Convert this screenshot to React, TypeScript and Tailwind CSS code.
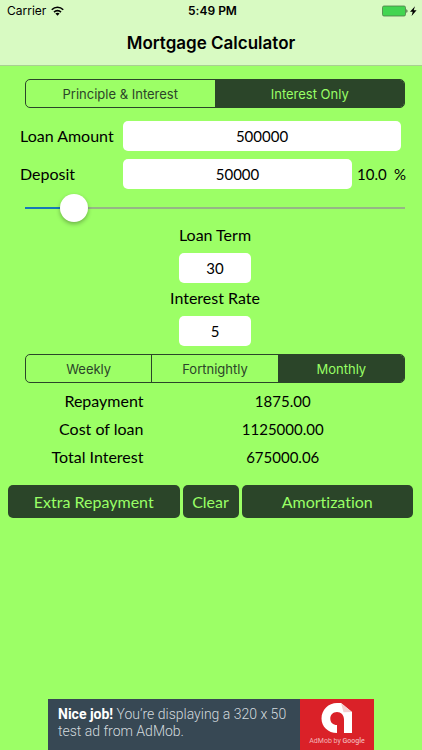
import React, { useState } from 'react';
import clsx from 'clsx';

const labelText = "font-['Gill_Sans','Lato',sans-serif] text-base leading-6 text-black";
const fieldBox = 'h-[30px] rounded-[5px] bg-white text-center text-[15px] outline-none';
const actionButton =
  "h-[33px] rounded-[5px] bg-[#2b4529] font-['Gill_Sans','Lato',sans-serif] text-base leading-6 text-[#99ff66]";

const Segmented = ({
  options,
  value,
  onChange,
}: {
  options: string[];
  value: string;
  onChange: (v: string) => void;
}) => (
  <div className="flex h-[29px] divide-x divide-[#2b4529] overflow-hidden rounded-[5px] border border-[#2b4529]">
    {options.map((option) => (
      <button
        key={option}
        type="button"
        aria-pressed={option === value}
        onClick={() => onChange(option)}
        className={clsx(
          "flex-1 basis-0 font-['Inter',sans-serif] text-[13px] leading-5",
          option === value ? 'bg-[#2b4529] text-[#99ff66]' : 'text-[#2b4529]',
        )}
      >
        {option}
      </button>
    ))}
  </div>
);

const StatusBar = () => (
  <div className="grid h-5 grid-cols-3 items-center pt-[2px] pr-1 pl-[7px] font-['Inter',sans-serif] text-xs text-black">
    <div className="flex items-center gap-[5px]">
      <span>Carrier</span>
      <svg width="13" height="10" viewBox="0 0 26 20" fill="none" stroke="#000" strokeWidth="3.2">
        <path d="M1.5 7.5C8 1 18 1 24.5 7.5" />
        <path d="M6 12.2C10 8.2 16 8.2 20 12.2" />
        <path d="M13 19.5L8.8 15.2C11.2 12.9 14.8 12.9 17.2 15.2Z" fill="#000" stroke="none" />
      </svg>
    </div>
    <span className="text-center font-semibold">5:49 PM</span>
    <div className="flex justify-end">
      <svg width="36" height="12" viewBox="0 0 36 12">
        <rect x="0.5" y="1" width="23" height="10" rx="1.5" fill="#43d551" stroke="#4e7b48" strokeWidth="0.8" />
        <path d="M24.4 4.2C25.8 4.5 25.8 7.5 24.4 7.8Z" fill="#35542f" />
        <path d="M33 1.2L28 6.8H30.7L29.6 11L34.6 5.2H31.7Z" fill="#000" />
      </svg>
    </div>
  </div>
);

const AdBanner = () => (
  <a href="#ad" className="mx-12 mt-auto flex h-[51px] bg-[#374854] font-['Roboto',sans-serif]">
    <div className="flex-1 pt-[7px] pl-[10px] text-sm leading-[17px] font-light text-[#d3dade]">
      <p>
        <strong className="font-bold text-white">Nice job!</strong> You’re displaying a 320 x 50
      </p>
      <p>test ad from AdMob.</p>
    </div>
    <div className="flex w-[74px] flex-col items-center bg-[#da2128] pt-1">
      <svg width="32" height="31" viewBox="0 0 32 31" fill="#fff">
        <path d="M16 0H20L31 9V30H23V16.5C23 12 20 9 16 9C12 9 9.3 11.8 9.3 15.7C9.3 19.5 12 22 16 22V30C7 30 0.5 23.8 0.5 15.5C0.5 6.8 7.5 0 16 0Z" />
        <path d="M20 0L31 9L22.5 9.3Z" fill="#f3cfd0" />
      </svg>
      <span className="text-[7px] leading-[14px] text-[#f3b5b7]">
        AdMob by <b className="font-medium">Google</b>
      </span>
    </div>
  </a>
);

export default function App() {
  const [repaymentType, setRepaymentType] = useState('Interest Only');
  const [frequency, setFrequency] = useState('Monthly');
  const [loan, setLoan] = useState('500000');
  const [deposit, setDeposit] = useState('50000');
  const [term, setTerm] = useState('30');
  const [rate, setRate] = useState('5');

  const percent = Number(loan) > 0 ? Math.min(100, (Number(deposit) / Number(loan)) * 100) : 0;

  const results = [
    { label: 'Repayment', value: '1875.00' },
    { label: 'Cost of loan', value: '1125000.00' },
    { label: 'Total Interest', value: '675000.06' },
  ];

  return (
    <div className="flex min-h-screen flex-col bg-[#9cff66] [font-variant-ligatures:none]">
      <header className="h-[66px] border-b border-[#a9cf91] bg-[#d8fac2]">
        <StatusBar />
        <h1 className="pt-[9px] text-center font-['Inter',sans-serif] text-[17px] leading-7 font-semibold text-black">
          Mortgage Calculator
        </h1>
      </header>

      <main className={clsx(labelText, 'pt-[13px]')}>
        <div className="pr-[17px] pl-[25px]">
          <Segmented
            options={['Principle & Interest', 'Interest Only']}
            value={repaymentType}
            onChange={setRepaymentType}
          />
        </div>

        <div className="mt-[13px] flex items-center pr-[21px] pl-5">
          <label htmlFor="loan" className="w-[103px] shrink-0">
            Loan Amount
          </label>
          <input
            id="loan"
            className={clsx(fieldBox, 'min-w-0 flex-1')}
            value={loan}
            onChange={(e) => setLoan(e.target.value)}
          />
        </div>

        <div className="mt-2 flex items-center pr-4 pl-5">
          <label htmlFor="deposit" className="w-[103px] shrink-0">
            Deposit
          </label>
          <input
            id="deposit"
            className={clsx(fieldBox, 'min-w-0 flex-1')}
            value={deposit}
            onChange={(e) => setDeposit(e.target.value)}
          />
          <span className="flex w-[54px] justify-between pl-[5px] text-[15px]">
            <span>{percent.toFixed(1)}</span>
            <span>%</span>
          </span>
        </div>

        <div className="relative mt-1 mr-[17px] ml-[25px] flex h-[30px] items-center">
          <div className="h-[2px] w-full bg-[#96b686]">
            <div className="h-full bg-[#1678b8]" style={{ width: `${percent}%` }} />
          </div>
          <input
            type="range"
            aria-label="Deposit percentage"
            min={0}
            max={100}
            value={percent}
            onChange={(e) => setDeposit(String(Math.round((Number(loan) * Number(e.target.value)) / 100)))}
            className="absolute inset-0 w-full appearance-none bg-transparent [&::-webkit-slider-thumb]:size-7 [&::-webkit-slider-thumb]:appearance-none [&::-webkit-slider-thumb]:rounded-full [&::-webkit-slider-thumb]:bg-white [&::-webkit-slider-thumb]:shadow-[0_2px_4px_rgba(0,0,0,0.3)]"
          />
        </div>

        <div className="flex flex-col items-center pl-2">
          <label htmlFor="term">Loan Term</label>
          <input
            id="term"
            className={clsx(fieldBox, 'mt-[6px] w-[72px]')}
            value={term}
            onChange={(e) => setTerm(e.target.value)}
          />
          <label htmlFor="rate" className="mt-[3px]">
            Interest Rate
          </label>
          <input
            id="rate"
            className={clsx(fieldBox, 'mt-[6px] w-[72px]')}
            value={rate}
            onChange={(e) => setRate(e.target.value)}
          />
        </div>

        <div className="mt-2 pr-[17px] pl-[25px]">
          <Segmented options={['Weekly', 'Fortnightly', 'Monthly']} value={frequency} onChange={setFrequency} />
        </div>

        <dl className="mt-[6px] flex flex-col gap-1">
          {results.map((row) => (
            <div key={row.label} className="flex">
              <dt className="w-[34%] text-right">{row.label}</dt>
              <dd className="ml-[19%] w-[28%] text-center text-[15px]">{row.value}</dd>
            </div>
          ))}
        </dl>

        <div className="mt-4 flex gap-[3px] pr-[9px] pl-2">
          <button type="button" className={clsx(actionButton, 'flex-1')}>
            Extra Repayment
          </button>
          <button type="button" className={clsx(actionButton, 'w-14')}>
            Clear
          </button>
          <button type="button" className={clsx(actionButton, 'flex-1')}>
            Amortization
          </button>
        </div>
      </main>

      <AdBanner />
    </div>
  );
}
